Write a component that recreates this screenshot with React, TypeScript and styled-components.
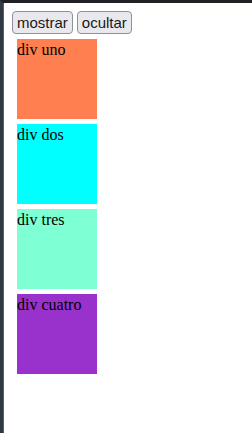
import styled, { createGlobalStyle } from "styled-components";

const GlobalStyle = createGlobalStyle`
    html {
        background: #ffffff;
        border-top: 3px solid #202124;
        border-left: 3px solid #2f3a45;
        box-shadow: inset 1px 0 0 #55606a;
        min-height: 100%;
        box-sizing: border-box;
    }
    body {
        margin: 8px 8px 8px 9px;
        font-family: "Liberation Serif", "Times New Roman", serif;
        font-size: 16px;
        color: #000000;
    }
`;

const boxes = [
    { label: "div uno", color: "#ff7f50" },
    { label: "div dos", color: "#00ffff" },
    { label: "div tres", color: "#7fffd4" },
    { label: "div cuatro", color: "#9932cc" },
];

export default function App() {
    return (
        <>
            <GlobalStyle />
            <Toolbar>
                <ActionButton>mostrar</ActionButton>
                <ActionButton>ocultar</ActionButton>
            </Toolbar>
            {boxes.map(b => (
                <ColorBox key={b.label} $color={b.color}>
                    {b.label}
                </ColorBox>
            ))}
        </>
    );
}

const Toolbar = styled.div`
    display: flex;
    gap: 4px;
    align-items: flex-start;
`;

const ActionButton = styled.button`
    height: 23px;
    padding: 0 4px;
    margin: 0;
    font-family: "Liberation Sans", Arial, sans-serif;
    font-size: 15px;
    color: #1a1a1a;
    background: #e9e9ed;
    border: 1px solid #8f8f9d;
    border-radius: 4px;
    cursor: pointer;
`;

const ColorBox = styled.div<{ $color: string }>`
    width: 80px;
    height: 80px;
    margin: 5px;
    background: ${props => props.$color};
    line-height: 22px;
`;
